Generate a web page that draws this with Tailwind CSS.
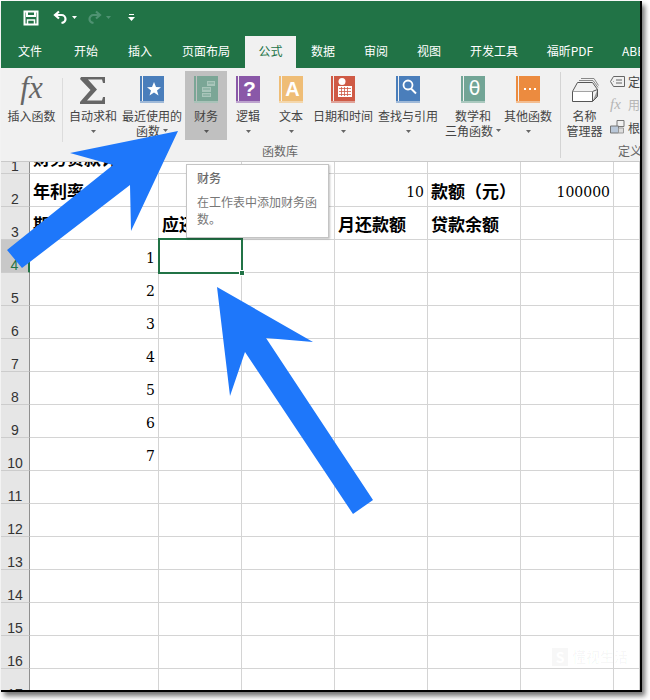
<!DOCTYPE html>
<html lang="zh">
<head>
<meta charset="utf-8">
<script src="https://cdn.jsdelivr.net/npm/@tailwindcss/browser@4"></script>
</head>
<body class="bg-white">
<div class="w-[650px] h-[700px] overflow-hidden pt-px pl-px font-['Noto_Sans_CJK_SC','Liberation_Sans',sans-serif]">
<div class="relative w-[641px] h-[691px] overflow-hidden bg-white border-r-2 border-b-2 border-black shadow-[3px_4px_5px_rgba(0,0,0,0.55)]">

  <!-- title bar -->
  <div class="h-[33px] bg-[#217346] flex items-center">
    <svg class="ml-[22px] w-[16px] h-[16px]" viewBox="0 0 16 16" fill="none" stroke="#ffffff" stroke-width="2"><path d="M1.5 1.5h13v13h-13z"/><path d="M4 1.5v4.5h8v-4.5"/><path d="M4.5 14.5v-4.5h7v4.5" stroke-width="1.5"/></svg>
    <svg class="ml-[14px] w-[15px] h-[15px]" viewBox="0 0 15 15" fill="none" stroke="#ffffff" stroke-width="2.2"><path d="M6 1.5l-4 3.5 4 3.5"/><path d="M2.5 5h6a4 4 0 0 1 4 4c0 2-1.500 3.500-4 4"/></svg>
    <svg class="ml-[4px] w-[5px] h-[3px]" viewBox="0 0 5 3"><path d="M0 0h5l-2.500 3z" fill="#ffffff"/></svg>
    <svg class="ml-[10px] w-[15px] h-[15px]" viewBox="0 0 15 15" fill="none" stroke="#4f9272" stroke-width="2.2"><path d="M9 1.500l4 3.500-4 3.500"/><path d="M12.500 5h-6a4 4 0 0 0-4 4c0 2 1.500 3.500 4 4"/></svg>
    <svg class="ml-[4px] w-[5px] h-[3px]" viewBox="0 0 5 3"><path d="M0 0h5l-2.500 3z" fill="#4f9272"/></svg>
    <svg class="ml-[17px] w-[7px] h-[7px]" viewBox="0 0 7 7" fill="#ffffff"><path d="M1 0h5v1h-5z"/><path d="M0 3h7l-3.500 4z"/></svg>
  </div>

  <!-- tabs -->
  <div class="h-[34px] bg-[#217346] flex items-end text-[12px] leading-[34px] text-white whitespace-nowrap overflow-hidden [&>div]:shrink-0">
    <div class="w-[58px] text-center">文件</div>
    <div class="w-[54px] text-center">开始</div>
    <div class="w-[54px] text-center">插入</div>
    <div class="w-[78px] text-center">页面布局</div>
    <div class="w-[51px] h-[32px] leading-[30px] text-center bg-[#f1f1f1] text-[#217346]">公式</div>
    <div class="w-[54px] text-center">数据</div>
    <div class="w-[52px] text-center">审阅</div>
    <div class="w-[54px] text-center">视图</div>
    <div class="w-[76px] text-center">开发工具</div>
    <div class="w-[76px] text-center">福昕PDF</div>
    <div class="pl-[14px]">ABBYY FineReader</div>
  </div>

  <!-- ribbon -->
  <div class="relative h-[94px] bg-[#f1f1f1] border-b border-[#c9c9c9] flex text-[12px] leading-[15px] text-[#444444] whitespace-nowrap overflow-hidden [&>div]:shrink-0">
    <div class="w-[61px] flex flex-col items-center pt-[4px]">
      <div class="h-[32px] text-[31px] leading-[32px] italic text-[#666666] font-['Liberation_Serif',serif]">fx</div>
      <div class="mt-[4px]">插入函数</div>
    </div>
    <div class="w-px h-[64px] mt-[10px] bg-[#dcdcdc]"></div>
    <div class="w-[60px] flex flex-col items-center pt-[8px]">
      <svg class="w-[26px] h-[28px]" viewBox="0 0 26 28"><path d="M1 1h24v6h-2l-1-3.500h-14l9 10-10 11h15l1-3.500h2v7h-25v-2l10.500-12-10.500-11z" fill="#666666"/></svg>
      <div class="mt-[4px]">自动求和</div>
      <svg class="mt-[7px] w-[5px] h-[3px]" viewBox="0 0 5 3"><path d="M0 0h5l-2.500 3z" fill="#666666"/></svg>
    </div>
    <div class="w-[58px] flex flex-col items-center pt-[8px]">
      <svg class="w-[24px] h-[28px]" viewBox="0 0 24 28"><path d="M0 0h24v25h-24z" fill="#4a7ebb"/><path d="M2 0h1v25h-1z" fill="#f1f1f1"/><path d="M0 25h24v2h-24z" fill="#9fb9d8"/><path d="M14 6l2 5 5 .2-4 3.300 1.500 5-4.500-3-4.500 3 1.500-5-4-3.300 5-.2z" fill="#ffffff"/></svg>
      <div class="mt-[4px]">最近使用的</div>
      <div class="flex items-center gap-[3px]">函数<svg class="w-[5px] h-[3px]" viewBox="0 0 5 3"><path d="M0 0h5l-2.500 3z" fill="#666666"/></svg></div>
    </div>
    <div class="ml-[4px] w-[42px] h-[69px] mt-[3px] bg-[#c0c0c0] flex flex-col items-center pt-[5px]">
      <svg class="w-[24px] h-[28px]" viewBox="0 0 24 28"><path d="M0 0h24v25h-24z" fill="#7ba696"/><path d="M2 0h1v25h-1z" fill="#c0c0c0"/><path d="M0 25h24v2h-24z" fill="#a8c2b8"/><path d="M13 5h8v5h-8zM8 11h9v5h-9zM8 17h9v4h-9z" fill="#a9c5ba"/><path d="M14 7h6M9 13h7M9 19h7" stroke="#7ba696"/></svg>
      <div class="mt-[4px]">财务</div>
      <svg class="mt-[7px] w-[5px] h-[3px]" viewBox="0 0 5 3"><path d="M0 0h5l-2.500 3z" fill="#555555"/></svg>
    </div>
    <div class="w-[42px] flex flex-col items-center pt-[8px]">
      <svg class="w-[24px] h-[28px]" viewBox="0 0 24 28"><path d="M0 0h24v25h-24z" fill="#8a58a8"/><path d="M2 0h1v25h-1z" fill="#f1f1f1"/><path d="M0 25h24v2h-24z" fill="#bda3ce"/><text x="13.500" y="20" text-anchor="middle" font-size="21" font-weight="700" fill="#ffffff" font-family="Liberation Sans">?</text></svg>
      <div class="mt-[4px]">逻辑</div>
      <svg class="mt-[7px] w-[5px] h-[3px]" viewBox="0 0 5 3"><path d="M0 0h5l-2.500 3z" fill="#666666"/></svg>
    </div>
    <div class="w-[44px] flex flex-col items-center pt-[8px]">
      <svg class="w-[24px] h-[28px]" viewBox="0 0 24 28"><path d="M0 0h24v25h-24z" fill="#efbd76"/><path d="M2 0h1v25h-1z" fill="#f1f1f1"/><path d="M0 25h24v2h-24z" fill="#f4d7ac"/><text x="13.500" y="20" text-anchor="middle" font-size="20" font-weight="700" fill="#ffffff" font-family="Liberation Sans">A</text></svg>
      <div class="mt-[4px]">文本</div>
      <svg class="mt-[7px] w-[5px] h-[3px]" viewBox="0 0 5 3"><path d="M0 0h5l-2.500 3z" fill="#666666"/></svg>
    </div>
    <div class="w-[60px] flex flex-col items-center pt-[8px]">
      <svg class="w-[24px] h-[28px]" viewBox="0 0 24 28"><path d="M0 0h24v25h-24z" fill="#cf5a45"/><path d="M2 0h1v25h-1z" fill="#f1f1f1"/><path d="M0 25h24v2h-24z" fill="#e0a298"/><circle cx="11" cy="5.500" r="3.500" fill="#ffffff"/><path d="M7 10h14v11h-14z" fill="#ffffff"/><path d="M8 12.500h12M8 15.500h12M8 18.500h12M10.500 11v9M13.500 11v9M16.500 11v9" stroke="#cf5a45" stroke-width=".8"/></svg>
      <div class="mt-[4px]">日期和时间</div>
      <svg class="mt-[7px] w-[5px] h-[3px]" viewBox="0 0 5 3"><path d="M0 0h5l-2.500 3z" fill="#666666"/></svg>
    </div>
    <div class="w-[70px] flex flex-col items-center pt-[8px]">
      <svg class="w-[24px] h-[28px]" viewBox="0 0 24 28"><path d="M0 0h24v25h-24z" fill="#4a7ebb"/><path d="M2 0h1v25h-1z" fill="#f1f1f1"/><path d="M0 25h24v2h-24z" fill="#9fb9d8"/><circle cx="12" cy="9" r="4.500" fill="none" stroke="#ffffff" stroke-width="1.800"/><path d="M15 12.500l5 5" stroke="#ffffff" stroke-width="2"/></svg>
      <div class="mt-[4px]">查找与引用</div>
      <svg class="mt-[7px] w-[5px] h-[3px]" viewBox="0 0 5 3"><path d="M0 0h5l-2.500 3z" fill="#666666"/></svg>
    </div>
    <div class="w-[60px] flex flex-col items-center pt-[8px]">
      <svg class="w-[24px] h-[28px]" viewBox="0 0 24 28"><path d="M0 0h24v25h-24z" fill="#72a596"/><path d="M2 0h1v25h-1z" fill="#f1f1f1"/><path d="M0 25h24v2h-24z" fill="#abc9bf"/><text x="13.500" y="19" text-anchor="middle" font-size="19" fill="#ffffff" font-family="DejaVu Sans">θ</text></svg>
      <div class="mt-[4px]">数学和</div>
      <div class="flex items-center gap-[3px]">三角函数<svg class="w-[5px] h-[3px]" viewBox="0 0 5 3"><path d="M0 0h5l-2.500 3z" fill="#666666"/></svg></div>
    </div>
    <div class="w-[50px] flex flex-col items-center pt-[8px]">
      <svg class="w-[24px] h-[28px]" viewBox="0 0 24 28"><path d="M0 0h24v25h-24z" fill="#ec8b3f"/><path d="M2 0h1v25h-1z" fill="#f1f1f1"/><path d="M0 25h24v2h-24z" fill="#f3bd90"/><path d="M8 12h2v2h-2zM13 12h2v2h-2zM18 12h2v2h-2z" fill="#ffffff"/></svg>
      <div class="mt-[4px]">其他函数</div>
      <svg class="mt-[7px] w-[5px] h-[3px]" viewBox="0 0 5 3"><path d="M0 0h5l-2.500 3z" fill="#666666"/></svg>
    </div>
    <div class="ml-[7px] w-px h-[86px] mt-[4px] bg-[#d4d4d4]"></div>
    <div class="w-[47px] flex flex-col items-center pt-[10px]">
      <svg class="w-[28px] h-[26px]" viewBox="0 0 28 26" fill="none" stroke="#555555"><path d="M1.500 23.500v-10h20v10z" fill="#ffffff"/><path d="M1.500 13.500l5-9h15l5 7-5 2" fill="#f1f1f1"/><path d="M8 2.500h14l5 7M10 .5h13l4.500 7" stroke="#888888"/><path d="M21.500 23.500l5-5v-7" fill="#9a9a9a"/></svg>
      <div class="mt-[4px]">名称</div>
      <div>管理器</div>
    </div>
    <div class="ml-[2px] flex flex-col pt-[6px] gap-[9px]">
      <div class="flex items-center gap-[3px] h-[14px]"><svg class="w-[15px] h-[11px]" viewBox="0 0 15 11" fill="none" stroke="#666666"><path d="M3.500.5h11v10h-11l-3-5z"/><path d="M6 4h6M6 7h6M3.500 5.500h.5"/></svg>定义名称</div>
      <div class="flex items-center gap-[3px] h-[14px] text-[#b5b5b5]"><span class="w-[15px] text-[15px] italic font-['Liberation_Serif',serif]">fx</span>用于公式</div>
      <div class="flex items-center gap-[3px] h-[14px]"><svg class="w-[15px] h-[14px]" viewBox="0 0 15 14"><path d="M7 .5h7v6h-7z" fill="none" stroke="#777777"/><path d="M.5 6h8v7h-8z" fill="#b9c7d8" stroke="#777777"/><path d="M8.500 8h5v5h-5z" fill="#dddddd" stroke="#999999"/></svg>根据所选内容创建</div>
    </div>
    <div class="absolute left-[261px] top-[75px] text-[#666666]">函数库</div>
    <div class="absolute left-[617px] top-[75px] text-[#666666]">定义的名称</div>
  </div>

  <!-- sheet -->
  <div class="grid grid-cols-[29px_129px_83px_93px_93px_93px_93px_1fr] grid-rows-[12px] auto-rows-[33px] overflow-hidden text-[17px] leading-[24px] font-bold text-black whitespace-nowrap [&>div]:border-r [&>div]:border-b [&>div]:border-[#d4d4d4] [&>div]:flex [&>div]:items-end [&>div]:pb-[3px] [&>div]:pl-[3px] [&>div:nth-child(8n+1)]:bg-[#e6e6e6] [&>div:nth-child(8n+1)]:border-r-[#8f8f8f] [&>div:nth-child(8n+1)]:border-b-[#cccccc] [&>div:nth-child(8n+1)]:justify-center [&>div:nth-child(8n+1)]:pl-0 [&>div:nth-child(8n+1)]:pb-0 [&>div:nth-child(8n+1)]:font-normal [&>div:nth-child(8n+1)]:text-[14px] [&>div:nth-child(8n+1)]:leading-[13px] [&>div:nth-child(8n+1)]:text-[#333333] [&>div:nth-child(8n+1)]:font-['Liberation_Sans',sans-serif]">
    <div>1</div><div class="overflow-visible">财务贷款计算表</div><div></div><div></div><div></div><div></div><div></div><div></div>
    <div>2</div><div>年利率</div><div></div><div></div><div class="justify-end pr-[3px] !pb-[2px] font-normal text-[14px] font-['DejaVu_Serif',serif]">10</div><div>款额（元）</div><div class="justify-end pr-[3px] !pb-[2px] font-normal text-[14px] font-['DejaVu_Serif',serif]">100000</div><div></div>
    <div>3</div><div>期数</div><div>应还本金</div><div></div><div>月还款额</div><div>贷款余额</div><div></div><div></div>
    <div class="!bg-[#c8c8c8] !border-r-[#217346] !border-r-2 !text-[#217346]">4</div><div class="justify-end pr-[3px] !pb-[2px] font-normal text-[14px] font-['DejaVu_Serif',serif]">1</div><div></div><div></div><div></div><div></div><div></div><div></div>
    <div>5</div><div class="justify-end pr-[3px] !pb-[2px] font-normal text-[14px] font-['DejaVu_Serif',serif]">2</div><div></div><div></div><div></div><div></div><div></div><div></div>
    <div>6</div><div class="justify-end pr-[3px] !pb-[2px] font-normal text-[14px] font-['DejaVu_Serif',serif]">3</div><div></div><div></div><div></div><div></div><div></div><div></div>
    <div>7</div><div class="justify-end pr-[3px] !pb-[2px] font-normal text-[14px] font-['DejaVu_Serif',serif]">4</div><div></div><div></div><div></div><div></div><div></div><div></div>
    <div>8</div><div class="justify-end pr-[3px] !pb-[2px] font-normal text-[14px] font-['DejaVu_Serif',serif]">5</div><div></div><div></div><div></div><div></div><div></div><div></div>
    <div>9</div><div class="justify-end pr-[3px] !pb-[2px] font-normal text-[14px] font-['DejaVu_Serif',serif]">6</div><div></div><div></div><div></div><div></div><div></div><div></div>
    <div>10</div><div class="justify-end pr-[3px] !pb-[2px] font-normal text-[14px] font-['DejaVu_Serif',serif]">7</div><div></div><div></div><div></div><div></div><div></div><div></div>
    <div>11</div><div></div><div></div><div></div><div></div><div></div><div></div><div></div>
    <div>12</div><div></div><div></div><div></div><div></div><div></div><div></div><div></div>
    <div>13</div><div></div><div></div><div></div><div></div><div></div><div></div><div></div>
    <div>14</div><div></div><div></div><div></div><div></div><div></div><div></div><div></div>
    <div>15</div><div></div><div></div><div></div><div></div><div></div><div></div><div></div>
    <div>16</div><div></div><div></div><div></div><div></div><div></div><div></div><div></div>
    <div>17</div><div></div><div></div><div></div><div></div><div></div><div></div><div></div>
  </div>

  <!-- selected cell -->
  <div class="absolute left-[157px] top-[237px] w-[85px] h-[36px] border-2 border-[#217346]"></div>
  <div class="absolute left-[238px] top-[269px] w-[6px] h-[6px] bg-[#217346] border border-white"></div>

  <!-- tooltip -->
  <div class="absolute left-[185px] top-[163px] w-[143px] h-[74px] bg-white border border-[#c4c4c4] shadow-[1px_1px_2px_rgba(0,0,0,0.25)] pl-[10px] pr-[9px] pt-[4px] text-[12px] leading-[17px] text-[#777777] whitespace-normal">
    <div class="font-medium text-[#6a6a6a]">财务</div>
    <div class="mt-[7px]">在工作表中添加财务函数。</div>
  </div>

  <!-- watermark -->
  <div class="absolute left-[551px] top-[645px] flex items-center gap-[4px] text-[14px] text-black/[0.03] font-bold"><span class="w-[16px] h-[18px] bg-black/[0.03] text-white text-center leading-[18px]">S</span>懂视生活</div>

  <!-- arrows -->
  <svg class="absolute left-[-1px] top-[-1px] w-[650px] h-[700px] pointer-events-none" viewBox="0 0 650 700">
    <path d="M178 131L70 153 113 165 7 250 22 268 130 185 131 231z" fill="#1e77fa"/>
    <path d="M217 287L313 342 266 338 373 500 353 514 245 352 230 396z" fill="#1e77fa"/>
  </svg>
</div>
</div>
</body>
</html>
